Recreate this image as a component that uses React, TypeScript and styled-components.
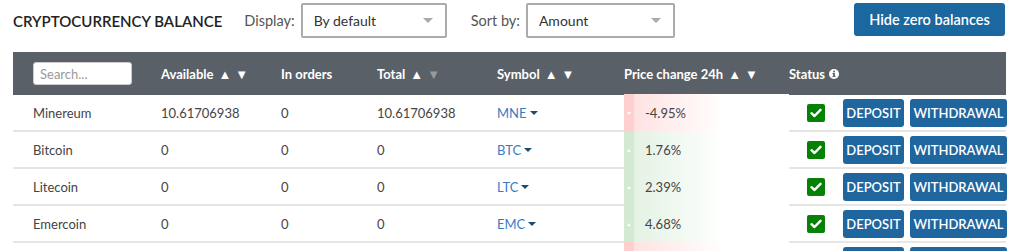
import styled, { createGlobalStyle } from "styled-components";

const GlobalStyle = createGlobalStyle`
    * { box-sizing: border-box; }
    body {
        margin: 0;
        background: #FFFFFF;
        font-family: Lato, "Open Sans", Arial, sans-serif;
        color: #444444;
    }
`

const coins = [
    { name: "Minereum", available: "10.61706938", orders: "0", total: "10.61706938", symbol: "MNE", change: -4.95 },
    { name: "Bitcoin", available: "0", orders: "0", total: "0", symbol: "BTC", change: 1.76 },
    { name: "Litecoin", available: "0", orders: "0", total: "0", symbol: "LTC", change: 2.39 },
    { name: "Emercoin", available: "0", orders: "0", total: "0", symbol: "EMC", change: 4.68 },
    { name: "Dogecoin", available: "0", orders: "0", total: "0", symbol: "DOGE", change: -1.12 },
]

const columns = "148px 120px 96px 120px 127px 165px 1fr";

export const Page = styled.div`
    padding: 3px 7px 0 13px;
    width: 1012px;
    height: 251px;
    overflow: hidden;
`

export const TopBar = styled.div`
    display: flex;
    flex-direction: row;
    align-items: center;
    height: 35px;
`

export const Title = styled.h1`
    margin: 0 22px 0 0;
    font-size: 15px;
    font-weight: 600;
    color: #222222;
`

export const Label = styled.span`
    font-size: 14.5px;
    color: #555555;
    margin-right: 6px;
`

export const SelectBox = styled.div<{ $width: number }>`
    width: ${p => p.$width}px;
    height: 35px;
    border: 2px solid #ABABAB;
    border-radius: 2px;
    display: flex;
    flex-direction: row;
    align-items: center;
    justify-content: space-between;
    padding: 0 12px 0 11px;
    font-size: 14px;
    color: #333333;
    margin-right: 24px;
`

export const SelectArrow = styled.span`
    width: 0;
    height: 0;
    border-left: 5px solid transparent;
    border-right: 5px solid transparent;
    border-top: 5px solid #AAAAAA;
`

export const PrimaryButton = styled.button`
    margin-left: auto;
    width: 151px;
    height: 33px;
    margin-top: -2px;
    padding: 0;
    border: none;
    border-radius: 3px;
    background-color: #1B67A0;
    color: #FFFFFF;
    font-family: Lato, sans-serif;
    font-size: 14.5px;
    font-weight: 600;
    cursor: pointer;
`

export const Table = styled.div`
    margin-top: 14px;
    width: 993px;
`

export const HeaderRow = styled.div`
    display: grid;
    grid-template-columns: ${columns};
    align-items: center;
    height: 43px;
    background-color: #5A6068;
    color: #FFFFFF;
    font-size: 13px;
    font-weight: 700;
`

export const HeadCell = styled.div`
    display: flex;
    flex-direction: row;
    align-items: center;
    gap: 4px;
    white-space: nowrap;
`

export const SearchInput = styled.input`
    margin-left: 20px;
    width: 99px;
    height: 23px;
    border: 1px solid #CCCCCC;
    border-radius: 3px;
    padding: 0 6px;
    font-family: Lato, sans-serif;
    font-size: 13px;
    color: #333333;
    &::placeholder { color: #9A9A9A; }
`

export const SortArrows = styled.span`
    display: flex;
    flex-direction: row;
    gap: 4px;
    margin-left: 1px;
    font-size: 13px;
`

export const Arrow = styled.span<{ $dim?: boolean }>`
    color: ${p => p.$dim ? "#9A9A9A" : "#FFFFFF"};
`

export const Row = styled.div`
    display: grid;
    grid-template-columns: ${columns};
    align-items: stretch;
    height: 37px;
    border-bottom: 2px solid #E6E6E6;
    font-size: 13px;
    color: #444444;
`

export const Cell = styled.div<{ $pad?: number }>`
    display: flex;
    flex-direction: row;
    align-items: center;
    padding-left: ${p => p.$pad ?? 0}px;
`

export const SymbolLink = styled.span`
    color: #3A7CC4;
    display: flex;
    align-items: center;
    gap: 3px;
`

export const Caret = styled.span`
    width: 0;
    height: 0;
    border-left: 4px solid transparent;
    border-right: 4px solid transparent;
    border-top: 4px solid #1A4D72;
    margin-top: 1px;
`

export const ChangeCell = styled.div<{ $up: boolean }>`
    display: flex;
    flex-direction: row;
    align-items: center;
    margin-top: -1px;
    margin-bottom: -2px;
    background: ${p => p.$up
        ? "linear-gradient(to right, #D2EAD2 0, #D2EAD2 10px, #E4F2E4 10px, #FFFFFF 100px)"
        : "linear-gradient(to right, #FFCFCF 0, #FFCFCF 10px, #FFE2E2 10px, #FFFFFF 100px)"};
`

export const ChangeMark = styled.span<{ $up: boolean }>`
    width: 10px;
    display: flex;
    justify-content: center;
    &::after {
        content: "";
        width: 0;
        height: 0;
        border-left: 2px solid transparent;
        border-right: 2px solid transparent;
        ${p => p.$up ? "border-bottom: 3px solid #FFFFFF;" : "border-top: 3px solid #FFFFFF;"}
    }
`

export const ChangeValue = styled.span`
    margin-left: 11px;
`

export const StatusCell = styled.div`
    display: flex;
    flex-direction: row;
    align-items: center;
    padding-left: 18px;
`

export const CheckBox = styled.span`
    width: 18px;
    height: 18px;
    border-radius: 2px;
    background-color: #058205;
    display: flex;
    align-items: center;
    justify-content: center;
    margin-right: 18px;
`

export const ActionButton = styled.button<{ $width: number }>`
    width: ${p => p.$width}px;
    height: 28px;
    margin-right: 6px;
    border: none;
    border-radius: 3px;
    background-color: #1F659E;
    color: #FFFFFF;
    font-family: Lato, sans-serif;
    font-size: 13px;
    font-weight: 600;
    padding: 0;
    cursor: pointer;
`

const InfoIcon = () => (
    <svg width="10" height="10" viewBox="0 0 10 10">
        <circle cx="5" cy="5" r="5" fill="#FFFFFF" />
        <circle cx="5" cy="2.6" r="1" fill="#5A6068" />
        <rect x="4.1" y="4.1" width="1.8" height="3.4" fill="#5A6068" />
        <rect x="3.4" y="7" width="3.2" height="0.9" fill="#5A6068" />
        <rect x="3.4" y="4.1" width="1.6" height="0.9" fill="#5A6068" />
    </svg>
)

const CheckIcon = () => (
    <svg width="12" height="10" viewBox="0 0 12 10">
        <path d="M1.5 5.2 L4.5 8 L10.5 1.8" stroke="#FFFFFF" strokeWidth="2.4" fill="none" strokeLinecap="round" strokeLinejoin="round" />
    </svg>
)

const Sort = ({ dimDown }: { dimDown?: boolean }) => (
    <SortArrows>
        <Arrow>▲</Arrow>
        <Arrow $dim={dimDown}>▼</Arrow>
    </SortArrows>
)

const App = () => {
    return (
        <Page>
            <GlobalStyle />
            <TopBar>
                <Title>CRYPTOCURRENCY BALANCE</Title>
                <Label>Display:</Label>
                <SelectBox $width={146}>
                    By default
                    <SelectArrow />
                </SelectBox>
                <Label>Sort by:</Label>
                <SelectBox $width={149}>
                    Amount
                    <SelectArrow />
                </SelectBox>
                <PrimaryButton>Hide zero balances</PrimaryButton>
            </TopBar>
            <Table>
                <HeaderRow>
                    <HeadCell><SearchInput type="text" placeholder="Search..." /></HeadCell>
                    <HeadCell>Available <Sort /></HeadCell>
                    <HeadCell>In orders</HeadCell>
                    <HeadCell>Total <Sort dimDown /></HeadCell>
                    <HeadCell>Symbol <Sort /></HeadCell>
                    <HeadCell>Price change 24h <Sort /></HeadCell>
                    <HeadCell>Status <InfoIcon /></HeadCell>
                </HeaderRow>
                {coins.map(coin => (
                    <Row key={coin.symbol}>
                        <Cell $pad={20}>{coin.name}</Cell>
                        <Cell>{coin.available}</Cell>
                        <Cell>{coin.orders}</Cell>
                        <Cell>{coin.total}</Cell>
                        <Cell>
                            <SymbolLink>{coin.symbol}<Caret /></SymbolLink>
                        </Cell>
                        <ChangeCell $up={coin.change > 0}>
                            <ChangeMark $up={coin.change > 0} />
                            <ChangeValue>{coin.change.toFixed(2)}%</ChangeValue>
                        </ChangeCell>
                        <StatusCell>
                            <CheckBox><CheckIcon /></CheckBox>
                            <ActionButton $width={61}>DEPOSIT</ActionButton>
                            <ActionButton $width={97}>WITHDRAWAL</ActionButton>
                        </StatusCell>
                    </Row>
                ))}
            </Table>
        </Page>
    )
}

export default App;
